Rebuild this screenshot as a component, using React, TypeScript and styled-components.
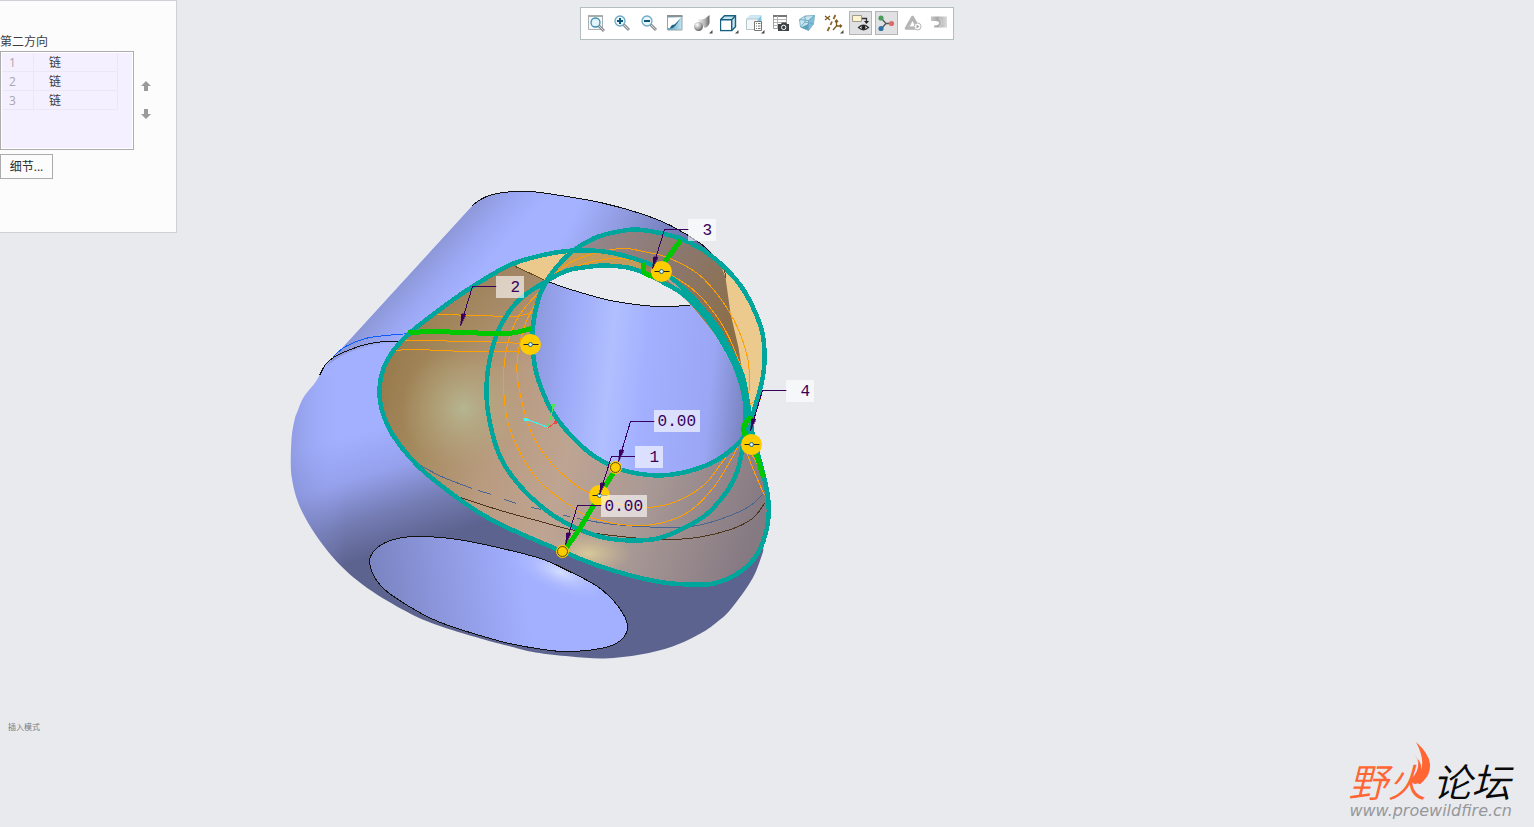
import React from "react";
import styled, { createGlobalStyle } from "styled-components";

const GlobalStyle = createGlobalStyle`
  * { box-sizing: border-box; }
  body {
    margin: 0;
    background: #e8eaee;
    font-family: "Open Sans", "Noto Sans CJK SC", sans-serif;
    font-size: 12px;
    color: #3c3c3c;
  }
`;

const Workspace = styled.main`
  position: relative;
  display: flex;
  flex-direction: column;
  justify-content: space-between;
  min-height: 100vh;
  overflow: hidden;
`;

const Header = styled.header`
  position: relative;
  z-index: 1;
  display: grid;
  grid-template-columns: 1fr auto 1fr;
  align-items: start;
`;

const Panel = styled.section`
  width: 177px;
  padding: 32px 0 53px;
  background: #fcfcfc;
  border: solid #cdd0d4;
  border-width: 1px 1px 1px 0;
`;

const PanelTitle = styled.h2`
  margin: 0;
  font-size: 12px;
  line-height: 18px;
  font-weight: 400;
`;

const ListRow = styled.div`
  display: flex;
  align-items: center;
  gap: 4px;
`;

const ListBox = styled.div`
  width: 134px;
  height: 99px;
  padding: 1px;
  border: 1px solid #acacac;
  background: #f4f0ff;
  box-shadow: inset 0 0 0 1px #ffffff;
`;

const ChainTable = styled.table`
  border-spacing: 0;
  width: 116px;
  line-height: 16px;
`;

const Cell = styled.td<{ $index?: boolean }>`
  width: ${(p) => (p.$index ? "32px" : "auto")};
  height: 19px;
  padding: 2px 0 0 ${(p) => (p.$index ? "7px" : "15px")};
  border: solid #eae8f4;
  border-width: 0 1px 1px 0;
  color: ${(p) => (p.$index ? "#a9a6ae" : "#3c3c3c")};
`;

const OrderButtons = styled.div`
  display: flex;
  flex-direction: column;
  gap: 12px;
  padding-bottom: 2px;
`;

const OrderButton = styled.button`
  display: grid;
  place-items: center;
  width: 16px;
  height: 16px;
  padding: 0;
  border: 0;
  background: none;
`;

const DetailsButton = styled.button`
  display: block;
  width: 53px;
  height: 25px;
  margin-top: 4px;
  padding: 0 0 2px;
  border: 1px solid #acacac;
  background: #fcfcfc;
  font: inherit;
  color: #2c2c2c;
`;

const Toolbar = styled.nav`
  display: flex;
  justify-content: space-between;
  align-items: center;
  width: 374px;
  height: 33px;
  margin-top: 7px;
  padding: 0 2px 1px 4px;
  background: #ffffff;
  border: 1px solid #b4bdbf;
`;

const ToolButton = styled.button<{ $pressed?: boolean }>`
  display: grid;
  place-items: center;
  width: 23px;
  height: 24px;
  padding: 0 1px 0 0;
  border: 1px solid ${(p) => (p.$pressed ? "#b2b4b6" : "transparent")};
  background: ${(p) => (p.$pressed ? "#dfe1e3" : "transparent")};
`;

const Scene = styled.div`
  position: absolute;
  top: 180px;
  left: 280px;
  width: 550px;
  height: 490px;
`;

const Tag = styled.span<{ $x: number; $y: number; $wide?: boolean }>`
  position: absolute;
  left: ${(p) => p.$x}px;
  top: ${(p) => p.$y}px;
  width: ${(p) => (p.$wide ? 46 : 28)}px;
  height: 22px;
  padding-right: 4px;
  background: rgba(255, 255, 255, 0.62);
  color: #38005c;
  font-family: "Liberation Mono", monospace;
  font-size: 16px;
  line-height: 24px;
  text-align: right;
`;

const Footer = styled.footer`
  display: flex;
  justify-content: space-between;
  align-items: flex-end;
  padding: 0 22px 7px 8px;
`;

const ModeText = styled.p`
  margin: 0 0 87px;
  font-size: 8px;
  line-height: 12px;
  color: #777b82;
`;

const Brand = styled.a`
  position: relative;
  color: inherit;
  text-decoration: none;
  font-style: italic;
`;

const BrandName = styled.div`
  display: flex;
  gap: 6px;
  margin-bottom: 4px;
  font-family: "Noto Sans CJK SC", sans-serif;
  font-size: 39px;
  font-weight: 350;
  line-height: 36px;
  color: #0a0a0a;
`;

const BrandAccent = styled.span`
  color: #ff6633;
`;

const BrandUrl = styled.div`
  font-family: "DejaVu Sans", sans-serif;
  font-size: 16px;
  line-height: 18px;
  padding-left: 1px;
  color: #96979a;
`;

const Flame = styled.svg`
  position: absolute;
  left: 58px;
  top: -20px;
`;

type Pt = [number, number];

/* Smooth curve through a list of points. */
function curve(pts: Pt[], closed = false): string {
  const n = pts.length;
  const at = (i: number): Pt =>
    closed ? pts[(i + n) % n] : pts[Math.max(0, Math.min(n - 1, i))];
  let d = `M${pts[0][0]} ${pts[0][1]}`;
  const last = closed ? n : n - 1;
  for (let i = 0; i < last; i++) {
    const [a, b, c, e] = [at(i - 1), at(i), at(i + 1), at(i + 2)];
    d += `C${b[0] + (c[0] - a[0]) / 6} ${b[1] + (c[1] - a[1]) / 6} ${c[0] - (e[0] - b[0]) / 6} ${c[1] - (e[1] - b[1]) / 6} ${c[0]} ${c[1]}`;
  }
  return closed ? d + "Z" : d;
}

const topRim: Pt[] = [[472, 205], [480, 199], [492, 194], [512, 191], [530, 191], [560, 195], [600, 202], [640, 213], [670, 225], [700, 243], [715, 257], [724, 270]];

const silhouette: Pt[] = [[763, 550], [752, 578], [730, 609], [716, 622], [700, 633], [672, 646], [640, 654], [604, 658], [570, 656], [535, 652], [510, 646], [480, 638], [435, 624], [402, 609], [362, 584], [330, 554], [302, 512], [291, 475], [291, 440], [294, 420], [297, 411], [303, 397], [314, 383], [319, 375], [325, 364], [333, 357]];

const bodyPath =
  curve(topRim) +
  "L735 300L740 400L750 450L763 500" +
  curve(silhouette).replace("M", "L") +
  "Z";

const frontOval: Pt[] = [[369, 562], [377, 547], [397, 538], [423, 536], [457, 539], [493, 546], [540, 558], [567, 570], [597, 586], [617, 605], [627, 625], [620, 640], [600, 648], [563, 651], [530, 647], [497, 640], [440, 622], [407, 605], [380, 585]];

const outer: Pt[] = [[573, 250], [545, 254], [513, 263], [490, 275], [460, 294], [430, 316], [410, 332], [393, 350], [383, 368], [379, 388], [381, 408], [392, 434], [417, 465], [447, 490], [480, 513], [513, 530], [562, 551], [597, 565], [630, 575], [663, 582], [690, 584], [713, 583], [737, 573], [753, 559], [763, 540], [768, 517], [767, 493], [760, 463], [752, 433], [747, 400], [742, 375], [730, 350], [717, 327], [697, 302], [673, 279], [657, 267], [630, 257], [603, 251]];

const ring: Pt[] = [[748, 430], [730, 450], [710, 463], [683, 472], [660, 475], [637, 473], [615, 467], [590, 453], [565, 429], [550, 408], [538, 380], [533, 357], [532, 333], [535, 310], [542, 288], [555, 268], [573, 250], [593, 238], [613, 232], [635, 229], [657, 232], [680, 238], [700, 248], [720, 263], [740, 285], [753, 308], [762, 333], [764, 360], [761, 383], [754, 408]];

const inner: Pt[] = [[745, 425], [742, 447], [737, 470], [727, 490], [707, 513], [683, 528], [657, 538], [630, 540], [603, 537], [577, 528], [550, 513], [520, 486], [500, 457], [489, 420], [486, 385], [492, 347], [503, 320], [520, 298], [547, 280], [567, 270], [583, 267], [603, 265], [627, 267], [643, 272], [663, 282], [683, 294], [703, 314], [722, 342], [737, 372], [744, 398]];

const hole: Pt[] = [[745, 433], [730, 450], [710, 463], [683, 472], [660, 475], [637, 473], [615, 467], [590, 453], [565, 429], [550, 408], [538, 380], [533, 357], [532, 333], [535, 310], [547, 280], [567, 270], [583, 267], [603, 265], [627, 267], [643, 272], [663, 283], [683, 297], [703, 320], [720, 343], [735, 372], [743, 398]];

const backRim: Pt[] = [[515, 266], [530, 273], [550, 282], [580, 292], [610, 300], [643, 305], [670, 306], [695, 304]];

const isoLines: Pt[][] = [
  [[434, 314], [480, 315], [513, 316], [532, 312]],
  [[402, 340], [477, 341], [522, 343]],
  [[394, 350], [415, 349], [467, 351], [519, 351]],
  [[540, 290], [520, 313], [508, 340], [503, 377], [507, 420], [520, 453], [540, 482], [577, 510], [600, 520], [633, 525], [663, 522], [690, 510], [713, 487], [730, 460], [741, 438]],
  [[540, 294], [525, 323], [517, 357], [518, 385], [530, 430], [547, 458], [567, 478], [587, 492], [613, 502], [643, 507], [673, 502], [703, 485], [723, 460], [740, 438]],
  [[550, 277], [570, 262], [597, 252], [623, 248], [643, 251], [667, 257], [697, 273], [720, 298], [737, 327], [747, 357], [749, 380], [749, 402], [761, 398]],
  [[550, 278], [573, 267], [597, 260], [620, 258], [640, 262], [673, 276], [697, 293], [717, 317], [730, 340], [742, 370]],
  [[743, 443], [752, 467], [764, 495]],
  [[748, 450], [755, 460], [761, 475]],
];

const hiddenLines: Pt[][] = [
  [[420, 465], [443, 477], [472, 488]],
  [[478, 490], [491, 494]],
  [[504, 499], [516, 503]],
  [[531, 507], [541, 509]],
  [[563, 515], [570, 516]],
  [[577, 518], [613, 524], [663, 527], [697, 525], [730, 515], [750, 505], [763, 493]],
];

const greenLines: Pt[][] = [
  [[408, 332], [435, 331], [460, 332], [500, 333], [515, 332], [531, 328]],
  [[680, 240], [663, 263]],
  [[643, 262], [644, 272], [653, 276]],
  [[613, 472], [602, 490], [590, 510], [578, 530], [566, 547]],
  [[751, 416], [744, 424], [744, 433], [749, 438]],
  [[756, 454], [763, 477]],
];

/* Elbow and tip of each leader; the horizontal part runs to the tag. */
const leaders = [
  { from: 496, elbow: [472, 287], tip: [460, 325] },
  { from: 688, elbow: [664, 230], tip: [652, 268] },
  { from: 786, elbow: [762, 391], tip: [750, 430] },
  { from: 654, elbow: [630, 422], tip: [618, 461] },
  { from: 634, elbow: [611, 457], tip: [599, 494] },
  { from: 601, elbow: [577, 506], tip: [565, 544] },
];

const tags = [
  { text: "2", x: 496, y: 276 },
  { text: "3", x: 688, y: 219 },
  { text: "4", x: 786, y: 380 },
  { text: "1", x: 635, y: 446 },
  { text: "0.00", x: 654, y: 410, wide: true },
  { text: "0.00", x: 601, y: 495, wide: true },
];

const markers: Pt[] = [[530, 344], [661, 271], [751, 444], [599, 495]];
const handles: Pt[] = [[615, 467], [562, 551]];

const Lines = ({ sets, color, width = 1 }: { sets: Pt[][]; color: string; width?: number }) => (
  <g fill="none" stroke={color} strokeWidth={width} shapeRendering="crispEdges">
    {sets.map((s, i) => (
      <path key={i} d={curve(s)} />
    ))}
  </g>
);

const Model = () => (
  <svg width="550" height="490" viewBox="279.500 179.500 550 490" role="img" aria-label="3D">
    <defs>
      <linearGradient id="dome" gradientUnits="userSpaceOnUse" x1="350" y1="435" x2="385" y2="552">
        <stop offset="0" stopColor="#a3b0ff" />
        <stop offset="0.35" stopColor="#95a1ec" />
        <stop offset="0.7" stopColor="#737bb2" />
        <stop offset="1" stopColor="#5d638f" />
      </linearGradient>
      <linearGradient id="cylEdge" gradientUnits="userSpaceOnUse" x1="400" y1="284" x2="438" y2="318">
        <stop offset="0" stopColor="#8d98d8" />
        <stop offset="0.5" stopColor="#9ba7f2" />
        <stop offset="1" stopColor="#a5b2ff" />
      </linearGradient>
      <linearGradient id="leftEdge" gradientUnits="userSpaceOnUse" x1="291" y1="0" x2="345" y2="0">
        <stop offset="0" stopColor="#6f79b4" stopOpacity="0.35" />
        <stop offset="1" stopColor="#a3b0ff" stopOpacity="0" />
      </linearGradient>
      <linearGradient id="topShade" gradientUnits="userSpaceOnUse" x1="590" y1="180" x2="700" y2="235">
        <stop offset="0" stopColor="#6c74a8" stopOpacity="0" />
        <stop offset="1" stopColor="#6068a0" stopOpacity="0.95" />
      </linearGradient>
      <linearGradient id="oval" gradientUnits="userSpaceOnUse" x1="375" y1="580" x2="520" y2="560">
        <stop offset="0" stopColor="#7b85c2" />
        <stop offset="0.5" stopColor="#8f9ae2" />
        <stop offset="1" stopColor="#a3b0ff" />
      </linearGradient>
      <linearGradient id="bore" gradientUnits="userSpaceOnUse" x1="530" y1="360" x2="750" y2="382">
        <stop offset="0" stopColor="#8d99dd" />
        <stop offset="0.18" stopColor="#9eabf8" />
        <stop offset="0.36" stopColor="#b1bfff" />
        <stop offset="0.52" stopColor="#a3b0ff" />
        <stop offset="0.82" stopColor="#9ba7f4" />
        <stop offset="1" stopColor="#7781bd" />
      </linearGradient>
      <linearGradient id="skin" gradientUnits="userSpaceOnUse" x1="380" y1="380" x2="765" y2="500">
        <stop offset="0" stopColor="#987a4c" />
        <stop offset="0.14" stopColor="#a68b60" />
        <stop offset="0.32" stopColor="#b99b80" />
        <stop offset="0.5" stopColor="#bea492" />
        <stop offset="0.72" stopColor="#a89895" />
        <stop offset="1" stopColor="#857982" />
      </linearGradient>
      <radialGradient id="olive" gradientUnits="userSpaceOnUse" cx="463" cy="408" r="62">
        <stop offset="0" stopColor="#b5b590" />
        <stop offset="1" stopColor="#b5a57c" stopOpacity="0" />
      </radialGradient>
      <linearGradient id="skinTop" gradientUnits="userSpaceOnUse" x1="500" y1="265" x2="500" y2="370">
        <stop offset="0" stopColor="#977a58" stopOpacity="0.6" />
        <stop offset="1" stopColor="#9a7d55" stopOpacity="0" />
      </linearGradient>
      <radialGradient id="glow" gradientUnits="userSpaceOnUse" cx="588" cy="553" r="44" gradientTransform="translate(588 553) scale(1 .5) translate(-588 -553)">
        <stop offset="0" stopColor="#d9c99a" />
        <stop offset="1" stopColor="#c8b890" stopOpacity="0" />
      </radialGradient>
      <radialGradient id="shine" gradientUnits="userSpaceOnUse" cx="560" cy="572" r="56" gradientTransform="rotate(22 560 572) translate(0 343) scale(1 .4)">
        <stop offset="0" stopColor="#d4deff" />
        <stop offset="1" stopColor="#a3b0ff" stopOpacity="0" />
      </radialGradient>
      <linearGradient id="crescent" gradientUnits="userSpaceOnUse" x1="580" y1="240" x2="735" y2="330">
        <stop offset="0" stopColor="#95878f" />
        <stop offset="0.5" stopColor="#8b786f" />
        <stop offset="1" stopColor="#8c6e47" />
      </linearGradient>
      <clipPath id="bodyClip"><path d={bodyPath} /></clipPath>
      <clipPath id="holeClip"><path d={curve(hole, true)} /></clipPath>
      <clipPath id="outerClip"><path d={curve(outer, true)} /></clipPath>
      <clipPath id="ringClip"><path d={curve(ring, true)} /></clipPath>
      <clipPath id="ovalClip"><path d={curve(frontOval, true)} /></clipPath>
    </defs>

    <g clipPath="url(#bodyClip)">
      <rect x="280" y="180" width="500" height="490" fill="url(#dome)" />
      <rect x="280" y="375" width="70" height="200" fill="url(#leftEdge)" />
      <path d="M333 357L472 205L472 180L740 180L740 340L402 341Q350 344 326 366Z" fill="url(#cylEdge)" />
      <rect x="500" y="180" width="240" height="130" fill="url(#topShade)" />
    </g>

    <g clipPath="url(#ovalClip)">
      <rect x="360" y="530" width="280" height="130" fill="url(#oval)" />
      <rect x="480" y="530" width="160" height="100" fill="url(#shine)" />
    </g>
    <path d={curve(frontOval, true)} fill="none" stroke="#111111" shapeRendering="crispEdges" />
    <Lines color="#111111" sets={[topRim, [[319, 375], [325, 364], [333, 357], [345, 351], [365, 344], [385, 341], [402, 341]]]} />
    <Lines color="#0a5cff" sets={[[[333, 356], [345, 346], [365, 338], [385, 335], [410, 333]]]} />

    <path d={curve(ring, true)} fill="url(#crescent)" />
    <g clipPath="url(#ringClip)">
      <path d="M718 258L725 277L730 313L738 347L743 380L750 425L775 420L775 258Z" fill="#ecca8d" />
    </g>
    <path d={curve(outer, true)} fill="url(#skin)" />
    <g clipPath="url(#outerClip)">
      <rect x="400" y="345" width="130" height="130" fill="url(#olive)" />
      <rect x="370" y="240" width="200" height="130" fill="url(#skinTop)" />
      <rect x="535" y="525" width="110" height="60" fill="url(#glow)" />
      <path d="M515 266L548 282L567 270L573 250L540 245Z" fill="#ebc98c" />
      <path d="M548 282Q560 262 573 245L645 255L648 285L590 268Z" fill="#c29a5b" />
      <path d="M644 260L648 280L700 330L742 400L752 400L720 325Z" fill="#9a7d58" />
    </g>

    <g clipPath="url(#holeClip)">
      <rect x="520" y="250" width="240" height="240" fill="#e8eaee" />
      <path d={curve(backRim) + "L720 320L760 400L760 490L520 490Z"} fill="url(#bore)" />
      <path d="M643 270L668 285L692 304L716 332L735 370L745 410L748 380L700 300Z" fill="#96775a" />
      <path d={curve(backRim)} fill="none" stroke="#111111" shapeRendering="crispEdges" />
    </g>
    <Lines color="#6b4a1c" sets={[[[515, 266], [530, 273], [547, 281]], [[720, 262], [724, 270], [725, 278]]]} />

    <Lines color="#4a6591" sets={hiddenLines} />
    <Lines color="#4c3519" sets={[[[460, 497], [500, 510], [540, 521], [575, 530], [630, 537], [663, 539], [697, 537], [730, 529], [752, 518], [764, 503]]]} />
    <Lines color="#ffa000" sets={isoLines} />

    <g fill="none" stroke="#00a69c" strokeWidth="4.500" strokeLinejoin="round" shapeRendering="crispEdges">
      <path d={curve(outer, true)} />
      <path d={curve(ring, true)} />
      <path d={curve(inner, true)} />
    </g>
    <Lines color="#00c800" width={5} sets={greenLines} />

    <g fill="none" shapeRendering="crispEdges">
      <path d="M524 418L548 427" stroke="#40f4f4" />
      <path d="M522 417h5v3h-3z" fill="#40f4f4" />
      <path d="M553 405L548 426" stroke="#4ae84a" />
      <circle cx="553" cy="405" r="1.500" fill="#4ae84a" />
      <path d="M548 427L556 421" stroke="#f04848" />
      <circle cx="555" cy="422" r="1.500" fill="#f04848" />
    </g>

    {markers.map(([x, y]) => (
      <g key={`${x}-${y}`}>
        <circle cx={x} cy={y} r="10.500" fill="#ffcc00" />
        <path d={`M${x - 7} ${y}h15`} stroke="#222222" />
        <circle cx={x} cy={y} r="2" fill="#d8f4ff" stroke="#25637a" />
      </g>
    ))}
    {handles.map(([x, y]) => (
      <g key={`${x}-${y}`}>
        <circle cx={x} cy={y} r="6.500" fill="#ffcc00" />
        <circle cx={x} cy={y} r="5" fill="#ffcc00" stroke="#5c4a10" />
      </g>
    ))}

    {leaders.map(({ from, elbow: [ex, ey], tip: [tx, ty] }) => (
      <g key={`${from}-${ex}`} stroke="#38005c" fill="#38005c" shapeRendering="crispEdges">
        <path d={`M${from} ${ey - 1}H${ex}L${tx} ${ty}`} fill="none" />
        <path d={`M${tx} ${ty}l1 -12l4 1z`} strokeWidth="0.500" />
      </g>
    ))}
  </svg>
);

const glassHandle = (
  <g>
    <path d="M9.500 9.500L15 15" stroke="#8b8f92" strokeWidth="3" />
    <path d="M10 10L14.500 14.500" stroke="#d6d9da" strokeWidth="1" />
  </g>
);
const dropMark = <path d="M18.500 15v3.500H15z" fill="#4a4a4a" />;

const icons: { label: string; pressed?: boolean; art: React.ReactNode }[] = [
  {
    label: "重新调整",
    art: (
      <>
        <path d="M.5 1h14v13.500H.5z" fill="#f7f8f8" stroke="#a9aeb0" />
        <path d="M0 1h15" stroke="#9aa0a2" strokeWidth="1.500" />
        <g transform="translate(1 1)">{glassHandle}</g>
        <circle cx="7.500" cy="7.500" r="4.500" fill="#e4f4fb" stroke="#3c8fb3" strokeWidth="1.300" />
      </>
    ),
  },
  {
    label: "放大",
    art: (
      <>
        {glassHandle}
        <circle cx="6" cy="6" r="5" fill="#e8f6fc" stroke="#6fa9c4" strokeWidth="1.300" />
        <path d="M3 6h6M6 3v6" stroke="#0c567c" strokeWidth="2" />
      </>
    ),
  },
  {
    label: "缩小",
    art: (
      <>
        {glassHandle}
        <circle cx="6" cy="6" r="5" fill="#e8f6fc" stroke="#6fa9c4" strokeWidth="1.300" />
        <path d="M3 6h6" stroke="#0c567c" strokeWidth="2" />
      </>
    ),
  },
  {
    label: "重画",
    art: (
      <>
        <defs>
          <linearGradient id="pane">
            <stop offset="0" stopColor="#4f9dbd" />
            <stop offset="1" stopColor="#c4e6f3" />
          </linearGradient>
        </defs>
        <path d="M.5 1h14.500v14H.5z" fill="url(#pane)" stroke="#9aa5a9" />
        <path d="M0 1h15.500" stroke="#8a9295" strokeWidth="2" />
        <path d="M1 2.500h13L8 9.500Q5 10 3 13H1z" fill="#ffffff" />
        <path d="M14 3L8.500 10.500Q7 13 3 13.500Q4 9.500 7.500 9.500Z" fill="#1d6382" />
      </>
    ),
  },
  {
    label: "渲染",
    art: (
      <>
        <defs>
          <radialGradient id="ball" cx=".35" cy=".3" r=".8">
            <stop offset="0" stopColor="#ffffff" />
            <stop offset=".5" stopColor="#b2b2b2" />
            <stop offset="1" stopColor="#4c4c4c" />
          </radialGradient>
          <linearGradient id="tube">
            <stop offset="0" stopColor="#f4f4f4" />
            <stop offset=".6" stopColor="#b4b4b4" />
            <stop offset="1" stopColor="#686868" />
          </linearGradient>
        </defs>
        <path d="M4 4q4 1 7-.5L15.500 0v8q-1 4-5 5q-1-3-5-4.500z" fill="url(#tube)" />
        <circle cx="4.500" cy="11.500" r="4.500" fill="url(#ball)" />
        {dropMark}
      </>
    ),
  },
  {
    label: "显示样式",
    art: (
      <>
        <path d="M.7 4.500L4.500.7h11v11l-3.700 3.800H.7z" fill="#c3e4f1" stroke="#1a5f7e" strokeWidth="1.400" />
        <path d="M1.400 5.200h10v9.600h-10z" fill="#ffffff" />
        <path d="M.7 4.700h11v10.800M11.700 4.700L15.500.7" fill="none" stroke="#1a5f7e" strokeWidth="1.400" />
        {dropMark}
      </>
    ),
  },
  {
    label: "已保存方向",
    art: (
      <>
        <path d="M.5 4L4 .5h11.500V11l-4 4H.5z" fill="#7fc6e0" />
        <path d="M.5 4L4 .5h11.500L12 4z" fill="#cdeaf4" />
        <path d="M.5 4H12v10.500H.5z" fill="#f4f8fa" stroke="#b5c6cd" />
        <path d="M8.500 6.500h7v9h-7z" fill="#ffffff" stroke="#777777" />
        <path d="M10 8.500h1m1 0h2.500m-4.500 2.500h1m1 0h2.500m-4.500 2.500h1m1 0h2.500" stroke="#777777" />
        {dropMark}
      </>
    ),
  },
  {
    label: "视图管理器",
    art: (
      <>
        <path d="M.5 1h13v12.500H.5z" fill="#ffffff" stroke="#a2a2a2" />
        <path d="M0 1h14" stroke="#777777" strokeWidth="2" />
        <path d="M4.500 1v12M1 4.500h12M1 7.500h12M1 10.500h12" stroke="#b4b4b4" />
        <path d="M5 9h3l1-1.500h4L14 9h2v7H5z" fill="#3f4345" />
        <circle cx="10.700" cy="12.400" r="2.200" fill="#3f4345" stroke="#ffffff" />
      </>
    ),
  },
  {
    label: "透视图",
    art: (
      <>
        <path d="M.5 4.500L6 1l9.500-.5L14.500 9l-5 6.500L1.500 12z" fill="#c8e5f0" stroke="#7fb4c9" />
        <path d="M9.500 5.500L15.500.5L14.500 9l-5 6.500z" fill="#7dbdd8" />
        <path d="M.5 4.500L9.500 5.500v10M9.500 5.500L15.500.5M6 1v6L1.500 12M6 7l8.500 2" fill="none" stroke="#6ea9c1" />
        <path d="M2 12.500L9 9v6z" fill="#5d9fbc" />
      </>
    ),
  },
  {
    label: "基准显示",
    art: (
      <>
        <path d="M0 1l5 4M5 1L0 5" stroke="#7c5a1e" strokeWidth="1.300" />
        <path d="M10.500 0l-2 4M7 6.500L5.500 10M4.500 12l-2 4" stroke="#8c6827" strokeWidth="1.800" />
        <path d="M11.500 5.500V11h5M11.500 11l-3.500 4M10 7l1.500-2L13 7M15 9.500l1.500 1.500L15 12.500" fill="none" stroke="#7c5a1e" strokeWidth="1.300" />
        {dropMark}
      </>
    ),
  },
  {
    label: "注释显示",
    pressed: true,
    art: (
      <>
        <path d="M.5.500h9v6h-9z" fill="#fff4d0" stroke="#a09c88" />
        <path d="M10 3.500h4.500V7" stroke="#333333" strokeWidth="1.300" />
        <path d="M12 6h5l-2.500 3z" fill="#222222" />
        <path d="M6.500 12.500q5-4.500 10 0q-5 4.500-10 0z" fill="#ffffff" stroke="#333333" strokeWidth="1.200" />
        <circle cx="11.500" cy="12.500" r="2" fill="#222222" />
      </>
    ),
  },
  {
    label: "旋转中心",
    pressed: true,
    art: (
      <>
        <path d="M3 3l5 5.500L3 14M8 8.500h6" fill="none" stroke="#555555" strokeWidth="1.300" />
        <circle cx="3" cy="3" r="2.600" fill="#4a9c5c" />
        <circle cx="13.500" cy="8.500" r="2.600" fill="#e06a66" />
        <circle cx="3" cy="13.500" r="2.600" fill="#2f73a6" />
      </>
    ),
  },
  {
    label: "仿真",
    art: (
      <>
        <path d="M7.500 2L14 13.500H1z" fill="none" stroke="#b4b4b4" strokeWidth="2.600" strokeLinejoin="round" />
        <path d="M7.500 5L11 12H4z" fill="#ffffff" stroke="#9f9f9f" strokeWidth=".800" />
        <circle cx="12.500" cy="11.500" r="3.500" fill="#ffffff" stroke="#b5b5b5" />
        <path d="M11.500 9.500l3 2-3 2z" fill="#a5a5a5" />
      </>
    ),
  },
  {
    label: "结果",
    art: (
      <>
        <defs>
          <linearGradient id="flow">
            <stop offset="0" stopColor="#c8c8c8" />
            <stop offset=".4" stopColor="#a8a8a8" />
            <stop offset="1" stopColor="#dcdcdc" />
          </linearGradient>
        </defs>
        <path d="M0 1.500h16v11H3V10.500q5 0 5-2.500T3 6H0z" fill="url(#flow)" />
        <path d="M8 3q3.500 2 3 5t-3 4" fill="none" stroke="#d2d2d2" strokeWidth="1" />
      </>
    ),
  },
];

const App = () => (
  <>
    <GlobalStyle />
    <Workspace>
      <Scene>
        <Model />
        {tags.map((t) => (
          <Tag key={`${t.text}-${t.x}`} $x={t.x - 280} $y={t.y - 180} $wide={t.wide}>
            {t.text}
          </Tag>
        ))}
      </Scene>

      <Header>
        <Panel>
          <PanelTitle>第二方向</PanelTitle>
          <ListRow>
            <ListBox>
              <ChainTable aria-label="第二方向">
                <tbody>
                  {[1, 2, 3].map((n) => (
                    <tr key={n}>
                      <Cell $index>{n}</Cell>
                      <Cell>链</Cell>
                    </tr>
                  ))}
                </tbody>
              </ChainTable>
            </ListBox>
            <OrderButtons>
              <OrderButton aria-label="上移">
                <svg width="10" height="10" viewBox="0 0 10 10"><path d="M5 0l5 5H7v5H3V5H0z" fill="#9b9b9b" /></svg>
              </OrderButton>
              <OrderButton aria-label="下移">
                <svg width="10" height="10" viewBox="0 0 10 10"><path d="M5 10l5-5H7V0H3v5H0z" fill="#9b9b9b" /></svg>
              </OrderButton>
            </OrderButtons>
          </ListRow>
          <DetailsButton>细节...</DetailsButton>
        </Panel>
        <Toolbar>
          {icons.map((icon) => (
            <ToolButton key={icon.label} aria-label={icon.label} $pressed={icon.pressed}>
              <svg width="16" height="16" viewBox="0 0 16 16" fill="none" overflow="visible">
                {icon.art}
              </svg>
            </ToolButton>
          ))}
        </Toolbar>
      </Header>

      <Footer>
        <ModeText>插入模式</ModeText>
        <Brand href="#">
          <Flame width="26" height="44" viewBox="0 0 26 44" aria-hidden="true">
            <path d="M10 0Q28 16 23 30Q19 42 9 42Q4 41 6 36Q14 28 12 17Q16 22 15 28Q19 17 10 0Z" fill="#ff6633" />
            <path d="M5 9Q15 18 13 29Q14 17 5 9Z" fill="#ff6633" />
          </Flame>
          <BrandName>
            <BrandAccent>野火</BrandAccent>
            <span>论坛</span>
          </BrandName>
          <BrandUrl>www.proewildfire.cn</BrandUrl>
        </Brand>
      </Footer>
    </Workspace>
  </>
);

export default App;
